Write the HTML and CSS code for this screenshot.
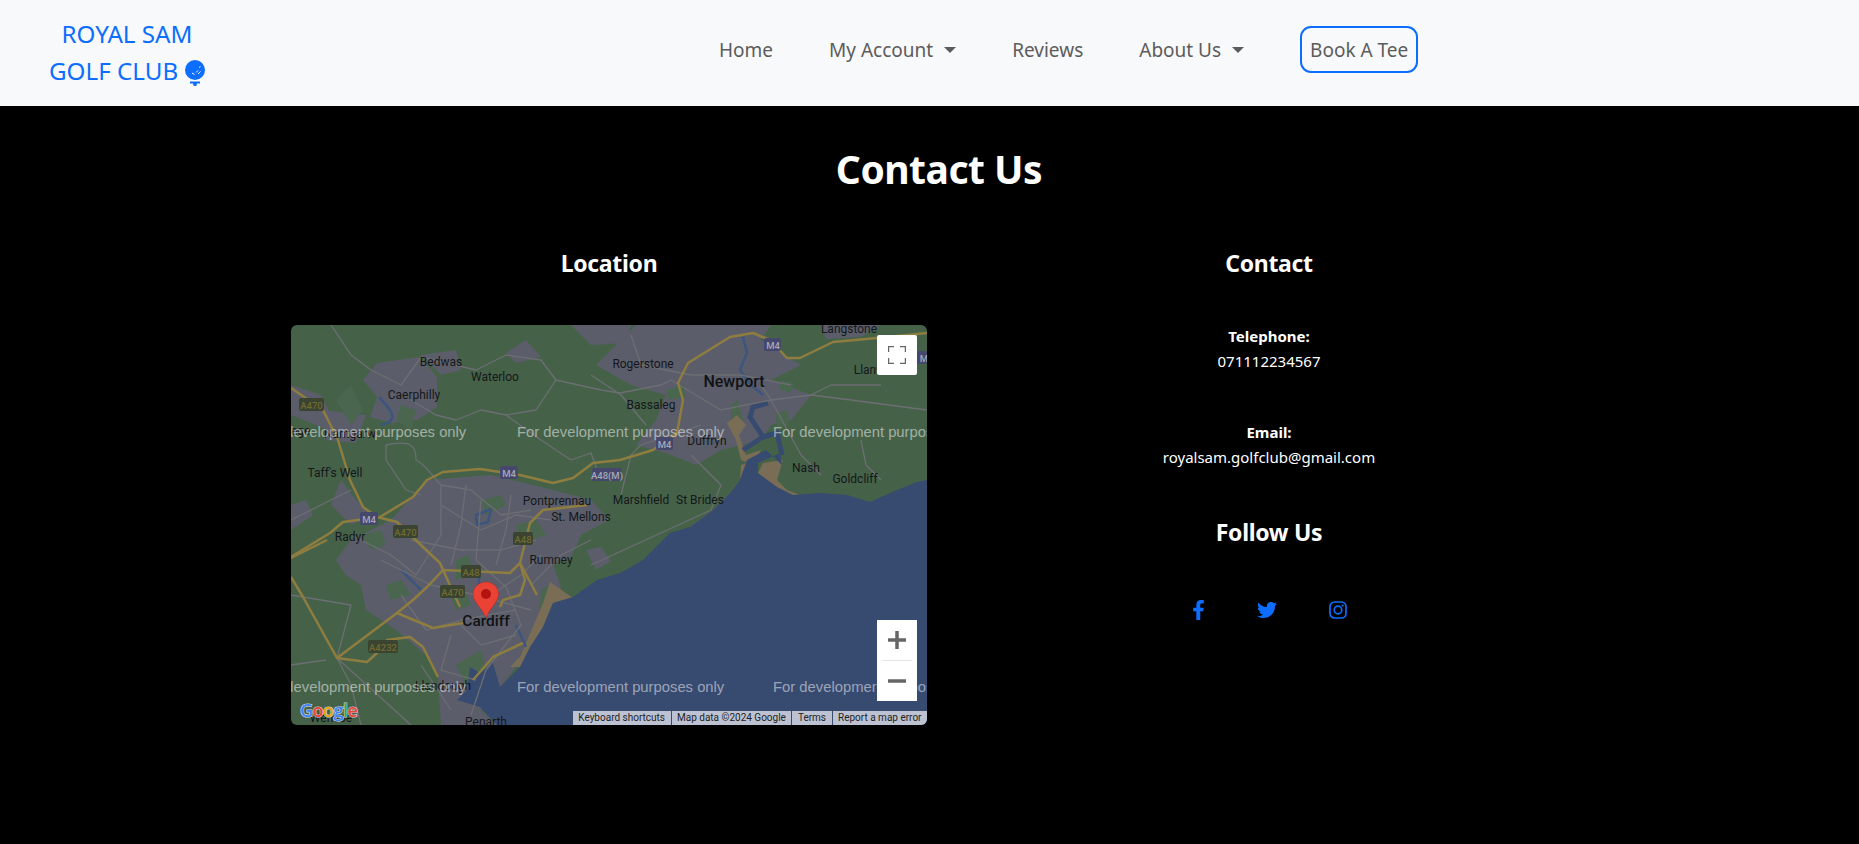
FILE: index.html
```html
<!DOCTYPE html>
<html lang="en">
<head>
<meta charset="utf-8">
<title>Contact Us - Royal Sam Golf Club</title>
<link rel="stylesheet" href="styles.css">
</head>
<body>
<header class="navbar">
  <a class="brand" href="#">ROYAL SAM<br>GOLF CLUB
    <svg class="brand-icon" viewBox="0 0 22 26" aria-hidden="true">
      <circle cx="11" cy="10" r="10"/>
      <path d="M6 21.500h10v2h-3l-1 3.500h-2l-1-3.500H6z"/>
      <path class="dimple" d="M8 13l2.500 1.500M12 12.500l2-2M14 14l2.500-2.500M15 7.500l1.500-1"/>
    </svg>
  </a>
  <nav class="nav">
    <a class="nav-link" href="#">Home</a>
    <a class="nav-link caret" href="#">My Account</a>
    <a class="nav-link" href="#">Reviews</a>
    <a class="nav-link caret" href="#">About Us</a>
    <a class="nav-link book" href="#">Book A Tee</a>
  </nav>
</header>

<main class="page">
  <h1 class="title">Contact Us</h1>
  <div class="row">
    <section class="col">
      <h2 class="heading">Location</h2>
      <div class="map">
        <svg class="map-art" viewBox="0 0 636 400" aria-label="Map of Cardiff and Newport">
          <rect class="land" width="636" height="400"/>
          <g class="urban">
            <path d="M136 155L200 150L262 165L300 175L318 195L290 210L280 232L262 240L270 262L255 300L240 322L215 355L190 385L206 400L150 400L147 352L135 330L105 305L75 285L70 260L55 250L45 235L60 215L100 195Z"/>
            <path d="M72 55L86 38L129 32L146 52L146 82L126 95L102 98L79 92L86 72Z"/>
            <path d="M305 40L340 5L345 0L480 0L470 15L510 40L480 55L520 70L500 95L480 100L470 115L430 125L405 140L375 128L345 120L365 95L375 70L340 60Z"/>
            <path d="M50 155L65 175L80 190L60 200L40 180Z"/>
            <path d="M0 60L30 70L50 110L25 100L0 90Z"/>
            <path d="M280 0L340 0L335 18L300 20Z"/>
            <path d="M30 85L75 90L65 118L35 115Z"/>
            <path d="M130 30L165 25L170 45L150 50Z"/>
            <path d="M215 28L235 15L250 32L225 38Z"/>
            <path d="M530 0L590 0L570 12L535 14Z"/>
            <path d="M0 180L15 175L22 190L0 205Z"/>
            <path d="M295 225L310 222L320 236L305 245Z"/>
          </g>
          <g class="park">
            <path d="M190 175L210 170L215 180L195 190Z"/>
            <path d="M225 200L245 195L255 210L230 218Z"/>
            <path d="M165 235L178 230L182 248L165 255Z"/>
            <path d="M95 260L110 255L120 270L100 275Z"/>
            <path d="M250 265L262 258L260 285L248 290Z"/>
            <path d="M160 272L175 268L180 280L165 285Z"/>
            <path d="M70 210L90 205L95 220L80 225Z"/>
            <path d="M440 80L447 75L452 95L440 100Z"/>
            <path d="M375 65L392 60L395 72L378 75Z"/>
            <path d="M110 80L125 85L120 105L105 95Z"/>
            <path d="M490 55L503 58L500 68L488 64Z"/>
            <path d="M165 340L190 325L195 345L175 360Z"/>
            <path d="M60 60L72 85L60 100L45 75Z"/>
            <path d="M485 88L497 85L498 100L486 103Z"/>
          </g>
          <g class="mud">
            <path d="M446 90L436 98L445 115L450 135L462 140L470 125L455 130L448 110L455 100Z"/>
            <path d="M467 148L472 138L492 135L486 155L496 165L509 170L496 170L478 160Z"/>
            <path d="M456 138L446 162L429 182L402 202L399 202L422 185L439 168L449 155L450 140Z"/>
            <path d="M259 257L282 273L262 278L252 302L242 328L229 342L219 342L229 332L242 302L252 278Z"/>
          </g>
          <path class="water" d="M636 155L626 157L606 165L579 177L556 170L529 168L502 170L486 162L467 148L467 138L489 128L491 140L475 125L456 135L449 155L439 168L422 185L399 202L379 208L362 225L352 235L329 248L306 255L282 272L262 278L252 302L239 322L229 342L209 362L202 338L189 348L179 342L176 365L166 375L189 382L206 400L636 400Z"/>
          <g class="river">
            <path class="wide" d="M477 78L462 82L459 92L472 112L452 125"/>
            <path class="wide" d="M472 112L486 108L491 130"/>
            <path d="M452 12L456 28L449 45L460 60L472 70"/>
            <path d="M225 300L235 322"/>
            <path d="M188 250V275"/>
            <path d="M88 72C100 85 110 95 90 100"/>
            <path d="M110 245L130 265"/>
            <path d="M185 190L186 200L197 197L200 184Z"/>
          </g>
          <g class="minor">
            <path d="M40 0L60 30L80 45L110 60L130 32L185 45L215 30L250 35L265 55L310 65L329 68"/>
            <path d="M265 55L245 85L215 90L190 85L165 95L145 90L120 75"/>
            <path d="M215 90L250 115L280 135L300 128L308 150"/>
            <path d="M95 120C120 115 125 120 125 135C135 140 140 150 150 160"/>
            <path d="M95 120L95 135L115 165L130 170"/>
            <path d="M0 195L30 180L60 165"/>
            <path d="M150 160L150 210L125 250L100 230L60 210"/>
            <path d="M150 160L180 165L210 190L240 185"/>
            <path d="M190 175L185 235L215 262L230 300L195 345L180 390"/>
            <path d="M110 270L135 305L170 295L225 285"/>
            <path d="M0 270L60 280L46 333L60 360L70 400"/>
            <path d="M0 340L35 335"/>
            <path d="M46 333L120 400"/>
            <path d="M200 270L230 250L250 230"/>
            <path d="M130 340L160 385"/>
            <path d="M430 85L480 75L520 70L560 75L636 85"/>
            <path d="M329 68L370 60L380 55L430 85"/>
            <path d="M470 60L480 75L510 130L530 150"/>
            <path d="M330 170L340 130L350 120L410 100"/>
            <path d="M400 130L430 160L420 185L300 240"/>
            <path d="M570 115L575 140L590 155"/>
            <path d="M300 50L330 70L355 100"/>
            <path d="M520 70L540 60L590 60"/>
            <path d="M340 10L350 40L400 50L450 50L500 60"/>
            <path d="M240 260L270 230L300 215"/>
            <path d="M150 180L190 205L225 190L260 195"/>
            <path d="M120 215L170 225L210 225L245 215"/>
            <path d="M90 235L140 260L185 270L240 285"/>
            <path d="M170 300L190 320L225 310"/>
            <path d="M160 310L150 345L185 355"/>
            <path d="M175 160L170 200L160 240"/>
            <path d="M220 170L215 205L205 240"/>
          </g>
          <g class="motorway">
            <path d="M0 232L39 208L52 197L89 192L122 172L136 155L152 147L189 144L229 150L262 158L282 153L302 138L329 135L362 125L386 108L392 75L387 58L397 38L439 12L462 8L479 15L496 33L509 33L542 17L586 13L636 8"/>
            <path d="M0 63L32 85L47 115L59 155L72 182L86 192L106 197L132 222L149 238L152 245L169 282"/>
            <path d="M229 238L219 248L152 245L136 262L122 275L106 288L46 333L12 272L0 252"/>
            <path d="M106 288L142 303L172 298"/>
            <path d="M46 333L76 337L86 328L96 315L119 312L132 322L147 352"/>
            <path d="M182 355L202 332L232 318"/>
            <path d="M229 238L246 270"/>
            <path d="M209 282L212 275L229 270L234 255L229 238"/>
            <path d="M296 180L252 185L239 198L229 238"/>
            <path d="M0 233L36 215"/>
          </g>
          <g class="shields">
            <g class="m"><rect x="209" y="141" width="18" height="13" rx="2"/><text x="218" y="151.500">M4</text></g>
            <g class="m"><rect x="69" y="187" width="18" height="13" rx="2"/><text x="78" y="197.500">M4</text></g>
            <g class="m"><rect x="301" y="143" width="30" height="13" rx="2"/><text x="316" y="153.500">A48(M)</text></g>
            <g class="m"><rect x="473" y="13" width="17" height="13" rx="2"/><text x="482" y="23.500">M4</text></g>
            <g class="m"><rect x="365" y="112" width="17" height="13" rx="2"/><text x="373.500" y="122.500">M4</text></g>
            <g class="m"><rect x="626" y="26" width="10" height="13" rx="2"/><text x="633" y="36.500">M</text></g>
            <g class="a"><rect x="8" y="73" width="25" height="13" rx="2"/><text x="20.500" y="83.500">A470</text></g>
            <g class="a"><rect x="102" y="200" width="25" height="13" rx="2"/><text x="114.500" y="210.500">A470</text></g>
            <g class="a"><rect x="222" y="207" width="20" height="13" rx="2"/><text x="232" y="217.500">A48</text></g>
            <g class="a"><rect x="170" y="240" width="20" height="13" rx="2"/><text x="180" y="250.500">A48</text></g>
            <g class="a"><rect x="149" y="260" width="25" height="13" rx="2"/><text x="161.500" y="270.500">A470</text></g>
            <g class="a"><rect x="77" y="315" width="30" height="13" rx="2"/><text x="92" y="325.500">A4232</text></g>
          </g>
          <g class="place">
            <text x="150" y="41">Bedwas</text>
            <text x="204" y="56">Waterloo</text>
            <text x="123" y="74">Caerphilly</text>
            <text x="59" y="113">Nantgarw</text>
            <text x="44" y="152">Taff's Well</text>
            <text x="59" y="216">Radyr</text>
            <text x="266" y="180">Pontprennau</text>
            <text x="290" y="196">St. Mellons</text>
            <text x="260" y="239">Rumney</text>
            <text x="152" y="365">Llandough</text>
            <text x="195" y="401">Penarth</text>
            <text x="40" y="397">Wenvoe</text>
            <text x="352" y="43">Rogerstone</text>
            <text x="360" y="84">Bassaleg</text>
            <text x="416" y="120">Duffryn</text>
            <text x="350" y="179">Marshfield</text>
            <text x="409" y="179">St Brides</text>
            <text x="515" y="147">Nash</text>
            <text x="564" y="158">Goldcliff</text>
            <text x="587" y="49">Llanwern</text>
            <text x="558" y="8">Langstone</text>
            <text x="0" y="110" class="start">ege</text>
          </g>
          <text class="city newport" x="443" y="62">Newport</text>
          <text class="city" x="195" y="301">Cardiff</text>
          <g class="dev">
            <text x="-32" y="112">For development purposes only</text>
            <text x="226" y="112">For development purposes only</text>
            <text x="482" y="112">For development purposes only</text>
            <text x="-32" y="367">For development purposes only</text>
            <text x="226" y="367">For development purposes only</text>
            <text x="482" y="367">For development purposes only</text>
          </g>
          <path class="pin" d="M195 293C192 284 182 277 182 269.500C182 262 188 257 195 257C202 257 207.500 262 207.500 269.500C207.500 277 198 284 195 293Z"/>
          <circle class="pin-dot" cx="195" cy="269" r="5"/>
          <text class="google" x="9" y="392"><tspan class="g-b">G</tspan><tspan class="g-r">o</tspan><tspan class="g-y">o</tspan><tspan class="g-b">g</tspan><tspan class="g-g">l</tspan><tspan class="g-r">e</tspan></text>
        </svg>
        <button class="map-btn fullscreen" aria-label="Toggle fullscreen view">
          <svg viewBox="0 0 18 18"><path d="M0 6V0h6M12 0h6v6M18 12v6h-6M6 18H0v-6"/></svg>
        </button>
        <div class="zoom-ctl">
          <button class="zoom-btn" aria-label="Zoom in"><svg viewBox="0 0 18 18"><path d="M0 9h18M9 0v18"/></svg></button>
          <span class="zoom-sep"></span>
          <button class="zoom-btn" aria-label="Zoom out"><svg viewBox="0 0 18 18"><path d="M0 9h18"/></svg></button>
        </div>
        <div class="attrib">
          <span>Keyboard shortcuts</span>
          <span>Map data ©2024 Google</span>
          <span>Terms</span>
          <span>Report a map error</span>
        </div>
      </div>
    </section>
    <section class="col contact">
      <h2 class="heading">Contact</h2>
      <div class="info first"><strong>Telephone:</strong><span>071112234567</span></div>
      <div class="info"><strong>Email:</strong><span>royalsam.golfclub@gmail.com</span></div>
      <h2 class="heading follow">Follow Us</h2>
      <div class="social">
        <a href="#" aria-label="Facebook"><svg class="fb" viewBox="0 0 320 512"><path d="M279.14 288l14.22-92.66h-88.91v-60.13c0-25.35 12.42-50.06 52.24-50.06h40.42V6.26S260.43 0 225.36 0c-73.22 0-121.08 44.38-121.08 124.72v70.62H22.89V288h81.39v224h100.17V288z"/></svg></a>
        <a href="#" aria-label="Twitter"><svg class="tw" viewBox="0 0 512 512"><path d="M459.37 151.716c.325 4.548.325 9.097.325 13.645 0 138.72-105.583 298.558-298.558 298.558-59.452 0-114.68-17.219-161.137-47.106 8.447.974 16.568 1.299 25.34 1.299 49.055 0 94.213-16.568 130.274-44.832-46.132-.975-84.792-31.188-98.112-72.772 6.498.974 12.995 1.624 19.818 1.624 9.421 0 18.843-1.3 27.614-3.573-48.081-9.747-84.143-51.98-84.143-102.985v-1.299c13.969 7.797 30.214 12.67 47.431 13.319-28.264-18.843-46.781-51.005-46.781-87.391 0-19.492 5.197-37.36 14.294-52.954 51.655 63.675 129.3 105.258 216.365 109.807-1.624-7.797-2.599-15.918-2.599-24.04 0-57.828 46.782-104.934 104.934-104.934 30.213 0 57.502 12.67 76.67 33.137 23.715-4.548 46.456-13.645 66.599-25.665-7.798 24.366-24.366 44.833-46.132 57.827 21.117-2.273 41.584-8.122 60.426-16.243-14.292 20.791-32.161 39.308-52.628 54.253z"/></svg></a>
        <a href="#" aria-label="Instagram"><svg class="ig" viewBox="0 0 18 18"><rect x="1" y="1" width="16" height="16" rx="4.500"/><circle cx="9" cy="9" r="3.800"/><circle class="ig-dot" cx="13.600" cy="4.400" r="1"/></svg></a>
      </div>
    </section>
  </div>
</main>
</body>
</html>
```
FILE: styles.css
```css
* { box-sizing: border-box; }
html, body { height: 100%; }
body {
  margin: 0;
  background: #000;
  color: #fff;
  font-family: "Noto Sans", "Open Sans", sans-serif;
  font-size: 15px;
  overflow: hidden;
}
a { text-decoration: none; }

.navbar {
  display: flex;
  align-items: center;
  height: 106px;
  padding-left: 49px;
  background: #f8f9fa;
}
.brand {
  width: 156px;
  flex: none;
  margin-bottom: 2px;
  text-align: center;
  color: #0d6efd;
  font-size: 24.200px;
  line-height: 37px;
  white-space: nowrap;
}
.brand-icon {
  width: 22px;
  height: 26px;
  vertical-align: -6px;
  fill: #0d6efd;
}
.brand-icon .dimple { fill: none; stroke: #f8f9fa; stroke-width: 1; }

.nav {
  display: flex;
  align-items: center;
  gap: 56px;
  margin-left: 514px;
  margin-bottom: 8px;
}
.nav-link {
  padding-top: 2px;
  color: #5c5c5c;
  font-size: 19px;
  white-space: nowrap;
}
.caret::after {
  content: "";
  display: inline-block;
  margin-left: 11px;
  vertical-align: 4px;
  border-top: 6px solid #5c5c5c;
  border-left: 6px solid transparent;
  border-right: 6px solid transparent;
}
.book {
  display: flex;
  align-items: center;
  height: 47px;
  padding: 2px 8px 0;
  border: 2px solid #0d6efd;
  border-radius: 11px;
}

.page { padding-top: 35px; }
.title {
  width: 1320px;
  margin: 0 0 0 279px;
  text-align: center;
  font-size: 39px;
  line-height: 56px;
  font-weight: 700;
  letter-spacing: -0.5px;
}
.row {
  display: flex;
  width: 1320px;
  margin: 48px 0 0 279px;
}
.col {
  width: 660px;
  padding: 0 12px;
  text-align: center;
}
.heading {
  margin: 0;
  font-size: 23px;
  line-height: 36px;
  font-weight: 700;
  letter-spacing: -0.3px;
}

.map {
  position: relative;
  width: 636px;
  height: 400px;
  margin-top: 44px;
  border-radius: 6px;
  overflow: hidden;
}
.map-art { display: block; width: 636px; height: 400px; }
.land { fill: #456249; }
.urban path { fill: #5b5e6a; }
.park path { fill: #4a664f; }
.mud path { fill: #7a6d55; }
.water { fill: #374a70; }
.river path { fill: none; stroke: #3b5480; stroke-width: 2.500; }
.river .wide { stroke: #374a70; stroke-width: 5; }
.minor path { fill: none; stroke: #6c6e73; stroke-width: 1.300; stroke-linejoin: round; }
.motorway path { fill: none; stroke: #8f7d40; stroke-width: 2.500; stroke-linejoin: round; }
.shields text {
  font-family: Roboto, sans-serif;
  font-size: 9.500px;
  font-weight: 500;
  text-anchor: middle;
}
.shields .m rect { fill: #45476c; }
.shields .m text { fill: #a6a8b8; }
.shields .a rect { fill: #3a4430; }
.shields .a text { fill: #6f6a30; }
.place text {
  fill: #15171a;
  font-family: Roboto, sans-serif;
  font-size: 12px;
  text-anchor: middle;
}
.place .start { text-anchor: start; }
.city {
  fill: #111316;
  font-family: Roboto, sans-serif;
  font-size: 15.500px;
  font-weight: 500;
  text-anchor: middle;
}
.newport { font-size: 16px; }
.dev text {
  fill: rgba(255, 255, 255, 0.5);
  font-family: "Liberation Sans", Arial, sans-serif;
  font-size: 14.800px;
}
.pin { fill: #ea4335; stroke: #b3261e; stroke-width: 0.500; }
.pin-dot { fill: #b3140f; }
.google {
  font-family: "Open Sans", sans-serif;
  font-size: 18px;
  font-weight: 600;
  letter-spacing: -0.5px;
  stroke: #cfd3da;
  stroke-width: 1.200;
  paint-order: stroke;
}
.g-b { fill: #4285f4; }
.g-r { fill: #ea4335; }
.g-y { fill: #e5a50a; }
.g-g { fill: #34a853; }

.map-btn, .zoom-btn {
  display: flex;
  align-items: center;
  justify-content: center;
  padding: 0;
  border: 0;
  background: #fff;
}
.map-btn {
  position: absolute;
  top: 10px;
  right: 10px;
  width: 40px;
  height: 40px;
  border-radius: 2px;
}
.fullscreen svg {
  width: 18px;
  height: 18px;
  fill: none;
  stroke: #666;
  stroke-width: 2.500;
}
.zoom-ctl {
  position: absolute;
  top: 295px;
  right: 10px;
  display: flex;
  flex-direction: column;
  align-items: center;
  width: 40px;
  height: 81px;
  background: #fff;
  border-radius: 2px;
}
.zoom-btn { width: 40px; height: 40px; }
.zoom-btn svg {
  width: 18px;
  height: 18px;
  fill: none;
  stroke: #666;
  stroke-width: 3.500;
}
.zoom-sep { width: 30px; height: 1px; background: #e6e6e6; }
.attrib {
  position: absolute;
  right: 0;
  bottom: 0;
  display: flex;
  gap: 1px;
  height: 14px;
  background: #374a70;
  font-family: Roboto, sans-serif;
  font-size: 10px;
  line-height: 14px;
  color: #222;
}
.attrib span {
  padding: 0 5.500px;
  background: #bcc2d2;
  white-space: nowrap;
}

.info {
  display: flex;
  flex-direction: column;
  font-size: 15px;
  line-height: 25px;
}
.info strong { font-weight: 700; }
.info.first { margin-top: 43px; }
.info + .info { margin-top: 46px; }
.follow { margin-top: 44px; }
.social {
  display: flex;
  justify-content: center;
  align-items: center;
  gap: 52px;
  margin-top: 50px;
}
.social a { display: flex; color: #0d6efd; }
.social svg { height: 20px; fill: #0d6efd; }
.fb { width: 13px; }
.tw { width: 20px; }
.ig { width: 18px; }
.ig rect, .ig circle { fill: none; stroke: #0d6efd; stroke-width: 1.700; }
.ig .ig-dot { fill: #0d6efd; stroke: none; }
```
